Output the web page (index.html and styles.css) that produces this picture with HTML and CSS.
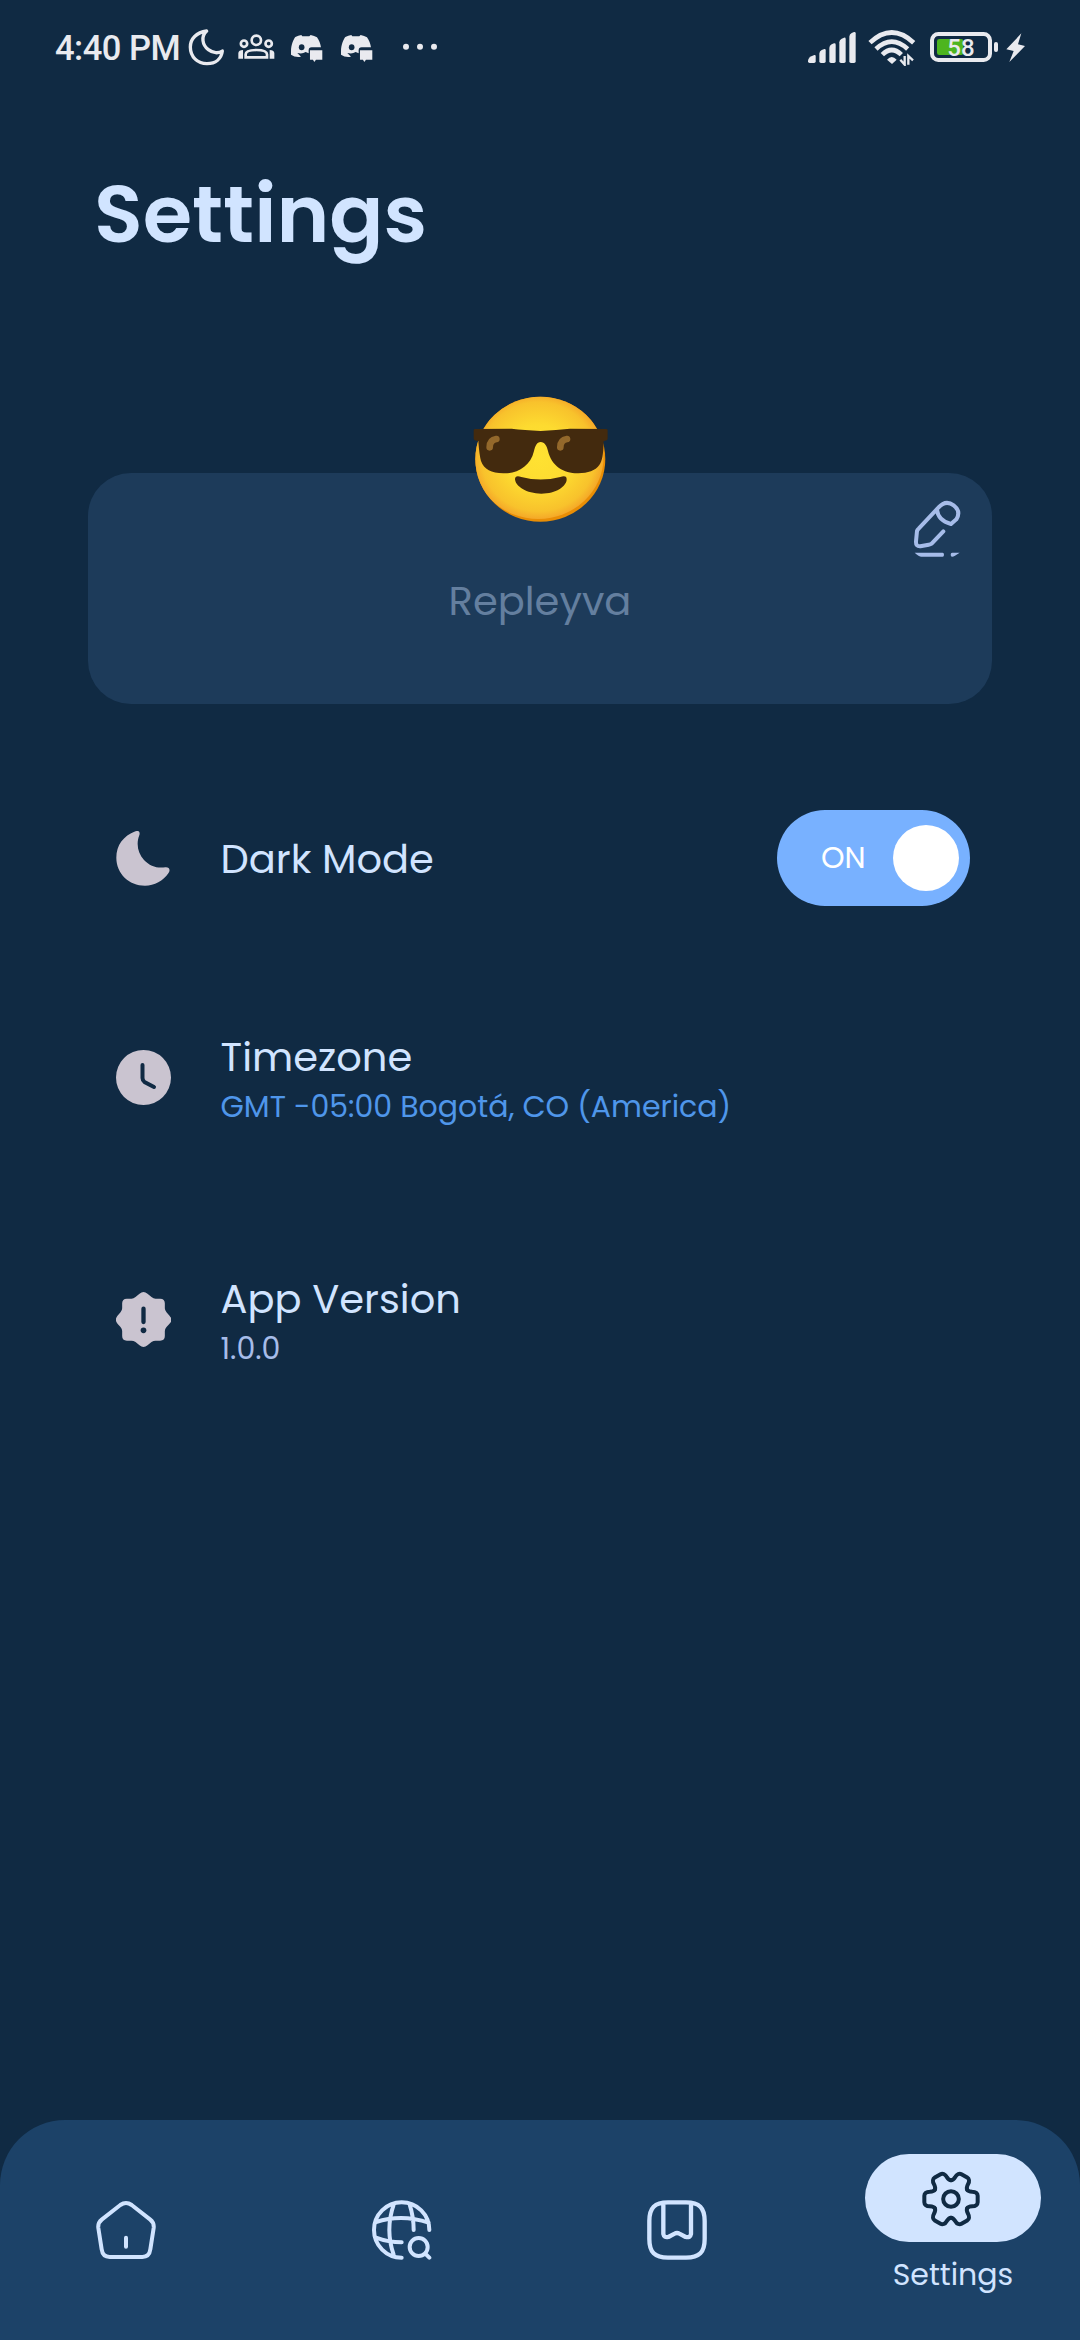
FILE: index.html
```html
<!DOCTYPE html>
<html lang="en">
<head>
<meta charset="utf-8">
<title>Settings</title>
<link rel="stylesheet" href="styles.css">
</head>
<body>
<div class="screen">
  <header class="status">
    <div class="status-left">
      <span class="clock">4:40 PM</span>
      <svg class="s-moon" viewBox="440 50 120 120"><path d="M499 62C468 66 450 86 450 110C450 140 472 160 500 160C526 160 543 145 546 122C535 130 518 129 504 118C486 104 481 78 499 62Z" fill="none" stroke="#e9eaef" stroke-width="10" stroke-linejoin="round"/></svg>
      <svg class="s-group" viewBox="590 70 120 80" fill="none" stroke="#e9eaef" stroke-width="8"><circle cx="648" cy="92" r="14"/><circle cx="611" cy="102" r="9.5"/><circle cx="685" cy="102" r="9.5"/><path d="M616 143V134C616 125 630 121 648 121S680 125 680 134V143Z"/><path d="M594 147V130Q595 121 608 121V147ZM702 147V130Q701 121 688 121V147Z" fill="#e9eaef" stroke="none"/></svg>
      <svg class="s-chat" viewBox="750 70 100 90"><path d="M753 126C753 105 760 90 766 82Q775 77 784 76L787 80H808L812 76Q823 78 831 83C837 91 842 103 843 113H815Q806 113 806 122V131L797 127Q787 134 772 130L783 141Q766 144 753 135Z" fill="#e9eaef"/><path d="M810 122H847V150H828L823 157L819 150H810Z" fill="#e9eaef"/><ellipse cx="785" cy="113" rx="8.500" ry="9" fill="#102a43"/></svg>
      <svg class="s-chat second" viewBox="750 70 100 90"><path d="M753 126C753 105 760 90 766 82Q775 77 784 76L787 80H808L812 76Q823 78 831 83C837 91 842 103 843 113H815Q806 113 806 122V131L797 127Q787 134 772 130L783 141Q766 144 753 135Z" fill="#e9eaef"/><path d="M810 122H847V150H828L823 157L819 150H810Z" fill="#e9eaef"/><ellipse cx="785" cy="113" rx="8.500" ry="9" fill="#102a43"/></svg>
      <svg class="s-dots" viewBox="1080 100 120 24" fill="#e9eaef"><circle cx="1098" cy="111" r="9"/><circle cx="1140" cy="111" r="9"/><circle cx="1182" cy="111" r="9"/></svg>
    </div>
    <div class="status-right">
      <svg class="s-signal" viewBox="51 60 150 105" fill="#e9eaef"><path d="M54 154Q54 145 64 139L73 135Q77 134 77 138V154Q77 159 72 159H59Q54 159 54 154Z"/><path d="M88 131Q88 124 95 120L103 117Q107 116 107 121V154Q107 159 102 159H93Q88 159 88 154Z"/><path d="M118 114Q118 107 125 103L132 100Q137 99 137 104V154Q137 159 132 159H123Q118 159 118 154Z"/><path d="M148 97Q148 90 155 86L162 83Q167 82 167 87V154Q167 159 162 159H153Q148 159 148 154Z"/><path d="M178 80Q178 73 185 69L192 66Q197 65 197 70V154Q197 159 192 159H183Q178 159 178 154Z"/></svg>
      <svg class="s-wifi" viewBox="231 57 150 111"><g fill="none" stroke="#e9eaef" stroke-width="14"><path d="M240 98Q305 37 371 98"/><path d="M258 117Q305 73 353 117"/><path d="M277 134Q305 106 334 134"/></g><path d="M291 149Q305 133 320 149L306 162Z" fill="#e9eaef"/><path d="M331 149L344 164V138M355 164V138L369 151" fill="none" stroke="#e9eaef" stroke-width="7"/></svg>
      <div class="battery"><svg viewBox="417 60 210 99"><rect x="441" y="87" width="79" height="48" rx="7" fill="#4db51f"/><rect x="426" y="72" width="174" height="78" rx="19" fill="none" stroke="#e9eaef" stroke-width="12"/><rect x="612" y="96" width="12" height="30" rx="6" fill="#e9eaef"/></svg><span class="charge">58</span></div>
      <svg class="s-bolt" viewBox="645 65 63 93"><path d="M694 69L649 117L671 122L658 155L705 107L684 102Z" fill="#e9eaef"/></svg>
    </div>
  </header>

  <h1 class="title">Settings</h1>

  <section class="profile">
    <svg class="avatar" viewBox="96 76 412 386">
      <defs>
        <radialGradient id="face" cx=".5" cy=".5" r=".51"><stop offset="0" stop-color="#ffe232"/><stop offset=".5" stop-color="#fddb30"/><stop offset=".86" stop-color="#f8c22c"/><stop offset="1" stop-color="#f4a428"/></radialGradient>
        <clipPath id="round"><ellipse cx="301" cy="268.500" rx="195" ry="187.500"/></clipPath>
      </defs>
      <g clip-path="url(#round)"><rect x="100" y="80" width="400" height="380" fill="#e98e05"/><ellipse cx="295" cy="261" rx="196" ry="187" fill="url(#face)"/></g>
      <path d="M101 182Q101 178 106 178L215 177Q252 181 302 184Q350 181 390 177L498 178Q503 178 503 182V207Q503 212 491 214C490 256 487 274 478 286C466 303 444 310 415 311C374 312 335 291 324 244C321 229 314 217 302 217S286 229 282 244C271 291 231 312 190 311C154 310 132 299 123 274Q118 257 115 214Q101 212 101 207Z" fill="#432a0e"/>
      <path d="M149 233Q149 211 169 208M361 233Q361 211 381 208" stroke="#93682b" stroke-width="20" stroke-linecap="round" fill="none"/>
      <path d="M225 329C225 319 233 318 244 322Q302 337 361 322C374 318 381 320 380 331C378 350 349 372 304 372C259 372 227 350 225 329Z" fill="#432a0e"/>
    </svg>
    <svg class="edit" viewBox="156 117 150 180" fill="none" stroke="#a6bce9" stroke-width="12" stroke-linecap="round" stroke-linejoin="round"><path d="M250 214L215 251Q212 253 206 254L181 259Q167 260 168 244L171 213Q172 210 176 206L235 143Q257 118 281 136Q304 154 289 178L273 192Q234 182 231 149"/><path d="M164 278H248Q252 278 252 284Q252 290 248 290H184Q177 290 164 278ZM277 278H299L285 287Q277 292 273 289Q270 278 277 278Z" fill="#a6bce9" stroke="none"/></svg>
    <span class="name">Repleyva</span>
  </section>

  <main class="options">
    <div class="option dark">
      <svg class="option-icon" viewBox="108 121 165 167"><path d="M166 122C175 118 181 124 178 133C167 162 174 189 192 209C210 228 232 235 257 231C268 230 273 238 267 248C250 273 224 287 195 287C146 287 108 250 108 202C108 165 129 136 166 122Z" fill="#cac4d0"/></svg>
      <div class="label"><span class="heading">Dark Mode</span></div>
      <div class="switch"><span class="on">ON</span><span class="knob"></span></div>
    </div>
    <div class="option zone">
      <svg class="option-icon" viewBox="0 0 55 55"><circle cx="27.500" cy="27.500" r="27.500" fill="#cac4d0"/><path d="M26.500 15V28Q26.500 30.500 28.500 32L38 37" fill="none" stroke="#102a43" stroke-width="4" stroke-linecap="round"/></svg>
      <div class="label"><span class="heading">Timezone</span><span class="detail link">GMT -05:00 Bogotá, CO (America)</span></div>
    </div>
    <div class="option version">
      <svg class="option-icon" viewBox="76.500 97 165 165"><path d="M159 97Q165 97 171 102L183 112Q189 117 195 117H209Q223 117 223 131V146Q223 152 228 158L237 168Q243 175 243 180Q243 186 237 192L228 202Q223 208 223 214V229Q223 243 209 243H195Q189 243 183 247L171 257Q165 262 159 262Q153 262 147 257L135 247Q129 243 123 243H109Q95 243 95 229V214Q95 208 90 202L81 192Q76 186 76 180Q76 175 81 168L90 158Q95 152 95 146V131Q95 117 109 117H123Q129 117 135 112L147 102Q153 97 159 97Z" fill="#cac4d0"/><path d="M159 147V187" stroke="#102a43" stroke-width="13" stroke-linecap="round"/><circle cx="159" cy="212" r="8.500" fill="#102a43"/></svg>
      <div class="label"><span class="heading">App Version</span><span class="detail number">1.0.0</span></div>
    </div>
  </main>

  <nav class="tabs">
    <a class="tab"><svg class="tab-icon" viewBox="288 300 180 180" fill="none" stroke="#d1e4ff" stroke-width="12" stroke-linecap="round" stroke-linejoin="round"><path d="M361 315Q378 303 395 315L450 358Q463 368 461 384L451 448Q448 471 427 471H329Q308 471 305 448L295 384Q293 368 306 358ZM378 413V440"/></svg></a>
    <a class="tab"><svg class="tab-icon" viewBox="1114 300 180 180" fill="none" stroke="#d1e4ff" stroke-width="12" stroke-linecap="round"><path d="M1203 473A83 83 0 1 1 1286 390M1179 314Q1153 390 1179 464M1227 314Q1239 351 1239 390M1126 366Q1203 341 1284 368M1126 413Q1163 427 1203 427"/><circle cx="1254" cy="441" r="27"/><path d="M1276 463L1286 473"/></svg></a>
    <a class="tab"><svg class="tab-icon" viewBox="81 300 180 180" fill="none" stroke="#d1e4ff" stroke-width="13" stroke-linejoin="round"><path d="M88 363C88 323 104 307 144 307H198C238 307 254 323 254 363V417C254 457 238 473 198 473H144C104 473 88 457 88 417ZM130 310V402Q132 414 145 411L164 401Q171 397 178 401L197 411Q211 414 213 402V310"/></svg></a>
    <a class="tab active"><span class="pill"><svg class="gear" viewBox="-90 -90 180 180" fill="none" stroke="#102a43" stroke-width="12" stroke-linecap="round"><defs><path id="tooth" d="M48.500-28C51-23.500 55-22.500 64-22C74-22 80-17 80-10V10C80 17 74 22 64 22C55 22.500 51 23.500 48.500 28"/></defs><circle r="23.500"/><use href="#tooth"/><use href="#tooth" transform="rotate(60)"/><use href="#tooth" transform="rotate(120)"/><use href="#tooth" transform="rotate(180)"/><use href="#tooth" transform="rotate(240)"/><use href="#tooth" transform="rotate(300)"/></svg></span><span class="tab-label">Settings</span></a>
  </nav>
</div>
</body>
</html>
```
FILE: styles.css
```css
* { box-sizing: border-box; }
body { margin: 0; background: #102a43; }
svg { display: block; flex: none; }
.screen {
  width: 1080px;
  height: 2340px;
  display: flex;
  flex-direction: column;
  overflow: hidden;
  background: #102a43;
  color: #d1e4ff;
  font-family: Poppins, Inter, sans-serif;
}

.status { height: 96px; display: flex; justify-content: space-between; color: #e9eaef; font-family: Roboto, sans-serif; }
.status-left, .status-right { display: flex; align-items: flex-start; }
.clock { width: 131.7px; margin-left: 55px; font-size: 34.500px; font-weight: 500; line-height: 96px; letter-spacing: -0.5px; white-space: nowrap; }
.s-moon { width: 40px; height: 40px; margin-top: 26.700px; }
.s-group { width: 40px; height: 26.700px; margin: 33.300px 0 0 10px; }
.s-chat { width: 33.300px; height: 30px; margin: 33.300px 0 0 13.300px; }
.s-chat.second { margin-left: 16.700px; }
.s-dots { width: 40px; height: 8px; margin: 43.300px 0 0 26.700px; }
.s-signal { width: 50px; height: 35px; margin-top: 30px; }
.s-wifi { width: 50px; height: 37px; margin: 29px 0 0 10px; }
.battery { position: relative; width: 70px; height: 33px; margin: 30px 0 0 12px; }
.battery svg { width: 70px; height: 33px; }
.charge { position: absolute; left: 0; top: 0; width: 64px; text-align: center; font-size: 24px; font-weight: 500; line-height: 36px; }
.s-bolt { width: 21px; height: 31px; margin: 31.700px 54px 0 6px; }

.title { margin: 58px 0 0 94px; font-size: 80px; font-weight: 600; line-height: 120px; }

.profile { position: relative; display: flex; justify-content: center; height: 231px; margin: 199px 88px 0; border-radius: 43px; background: #1d3b5a; }
.avatar { position: absolute; left: 384px; top: -77.700px; width: 137.300px; height: 128.700px; }
.edit { position: absolute; right: 30px; top: 26px; width: 50px; height: 60px; }
.name { margin-top: 98px; font-size: 40px; line-height: 60px; color: #647f9f; }

.options { flex: 1; padding: 106px 110px 0 115.500px; }
.option { display: flex; align-items: center; }
.option-icon { width: 55px; height: 55px; }
.label { display: flex; flex-direction: column; flex: 1; margin-left: 50px; padding-top: 2px; white-space: nowrap; }
.dark { height: 96px; }
.heading { font-size: 40px; line-height: 58px; }
.zone .heading, .version .heading { line-height: 56px; padding-bottom: 2px; }
.detail { font-size: 30px; line-height: 40px; }
.zone { height: 98px; margin-top: 122px; }
.version { height: 98px; margin-top: 144px; }
.link { color: #4f96ea; }
.number { color: #a6bce9; }
.switch { display: flex; align-items: center; justify-content: space-between; width: 193px; height: 96px; padding: 0 11px 0 44px; border-radius: 48px; background: #78b1ff; }
.on { font-size: 30px; line-height: 40px; color: #fff; }
.knob { width: 66px; height: 66px; border-radius: 50%; background: #fff; }

.tabs { display: flex; justify-content: space-between; height: 220px; padding: 0 39px 0 38px; border-radius: 65px 65px 0 0; background: #1c4268; }
.tab { display: flex; flex-direction: column; align-items: center; justify-content: center; width: 176px; }
.tab-icon { width: 60px; height: 60px; }
.tab.active { justify-content: flex-start; padding-top: 34px; }
.pill { display: flex; align-items: center; justify-content: center; width: 176px; height: 88px; border-radius: 44px; background: #d1e4ff; }
.gear { width: 60px; height: 60px; margin-right: 3px; margin-top: 1px; }
.tab-label { margin-top: 13px; font-size: 30px; line-height: 40px; }
```
